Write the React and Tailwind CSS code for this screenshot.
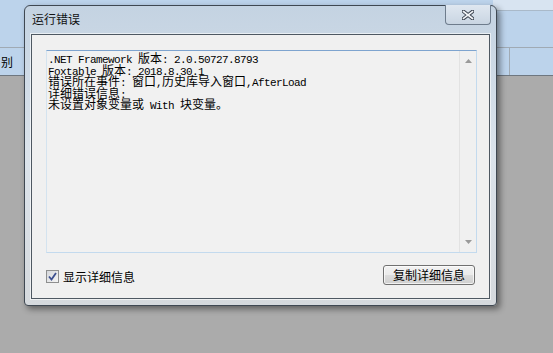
import React from "react";

const MONO = "font-mono text-[11px] tracking-[-0.6px]";
const CJK = "text-[12px]";

function Mixed({ s }) {
  const runs = [];
  let cur = "";
  let curAscii = null;
  for (const ch of s) {
    const a = ch.charCodeAt(0) < 128;
    if (curAscii === null || a === curAscii) {
      cur += ch;
    } else {
      runs.push([curAscii, cur]);
      cur = ch;
    }
    curAscii = a;
  }
  if (cur) runs.push([curAscii, cur]);
  return (
    <div className="h-[11.5px] text-[12px] leading-[11.5px] whitespace-pre">
      {runs.map(([a, t], i) => (
        <span key={i} className={a ? MONO : CJK}>
          {t}
        </span>
      ))}
    </div>
  );
}

export default function App() {
  const lines = [
    ".NET Framework 版本: 2.0.50727.8793",
    "Foxtable 版本: 2018.8.30.1",
    "错误所在事件: 窗口,历史库导入窗口,AfterLoad",
    "详细错误信息:",
    "未设置对象变量或 With 块变量。",
  ];
  return (
    <div className="relative w-[553px] h-[353px] overflow-hidden bg-[#ababab] font-['Noto_Sans_CJK_SC','Noto_Sans',sans-serif]">
      {/* background application */}
      <div className="flex flex-col">
        <div className="h-[47px] bg-[#bcd3eb] flex justify-end">
          <div className="w-[60px] h-[11px] bg-[#d8e4f1] border-b border-[#a9b9c9]" />
        </div>
        <div className="h-[29px] bg-[#bcd3eb] border-t border-[#a0aab4] border-b border-b-[#6e7780] flex">
          <div className="text-[12px] leading-[27px] pl-[1px] text-black">别</div>
          <div className="flex-1" />
          <div className="w-[44px] border-l border-[#a0aab4]" />
        </div>
      </div>

      {/* dialog window */}
      <div className="absolute left-[24px] top-[5px] w-[473px] h-[301px] rounded-t-[6px] rounded-b-[4px] border border-[#3f4852] bg-gradient-to-b from-[#c4d3e2] via-[#dbe3eb] to-[#d5d9dd] shadow-[3px_3px_6px_rgba(0,0,0,0.45)] flex flex-col">
        <div className="h-[28px] flex items-start relative">
          <div className="pl-[7px] pt-[6px] text-[12px] leading-[14px] text-[#111]">运行错误</div>
          <div className="absolute right-[5px] top-[-1px] w-[46px] h-[20px] rounded-b-[4px] border border-t-0 border-[#6e7c8c] bg-gradient-to-b from-[#dfe7f0] to-[#c9d5e2] flex items-center justify-center">
            <svg width="12" height="10" viewBox="0 0 12 10">
              <path d="M1.5 1.5 L10.5 8.5 M10.5 1.5 L1.5 8.5" stroke="#3b4350" strokeWidth="3.6" strokeLinecap="square" />
              <path d="M1.5 1.5 L10.5 8.5 M10.5 1.5 L1.5 8.5" stroke="#f4f6f9" strokeWidth="1.6" strokeLinecap="square" />
            </svg>
          </div>
        </div>
        <div className="mx-[6px] mb-[6px] flex-1 border border-[#4e5862] bg-[#f0f0f0] shadow-[0_0_0_1px_rgba(255,255,255,0.6)] flex flex-col">
          <div className="ml-[14px] mt-[15px] w-[431px] h-[203px] border border-[#c3daee] border-t-[#7ea4cf] border-l-[#d4e3ef] bg-[#f1f1f1] flex">
            <div className="flex-1 pl-[1px] pt-[1px] text-black">
              {lines.map((l, i) => (
                <Mixed key={i} s={l} />
              ))}
            </div>
            <div className="w-[17px] border-l border-[#e2e2e2] bg-[#f0f0f0] flex flex-col items-center justify-between py-[8px]">
              <svg width="7" height="4" viewBox="0 0 7 4">
                <path d="M0 4 L3.5 0 L7 4 Z" fill="#9a9a9a" />
              </svg>
              <svg width="7" height="4" viewBox="0 0 7 4">
                <path d="M0 0 L3.5 4 L7 0 Z" fill="#9a9a9a" />
              </svg>
            </div>
          </div>
          <div className="ml-[14px] mr-[14px] mt-[12px] flex items-start justify-between">
            <div className="flex items-center mt-[5px]">
              <div className="w-[13px] h-[13px] border border-[#8e8f8f] bg-gradient-to-br from-[#d6d8dc] to-[#f4f4f4] flex items-center justify-center">
                <svg width="9" height="9" viewBox="0 0 9 9">
                  <path d="M1 4.5 L3.5 7.5 L8 1" stroke="#3c4f8f" strokeWidth="1.8" fill="none" />
                </svg>
              </div>
              <span className="ml-[4px] text-[12px] leading-[13px] text-black">显示详细信息</span>
            </div>
            <div className="w-[92px] h-[20px] rounded-[3px] border border-[#707070] bg-[linear-gradient(to_bottom,#f2f2f2_0%,#ebebeb_50%,#dddddd_50%,#cfcfcf_100%)] shadow-[inset_0_0_0_1px_rgba(255,255,255,0.7)] flex items-center justify-center text-[12px] leading-[14px] text-black">
              复制详细信息
            </div>
          </div>
        </div>
      </div>
    </div>
  );
}
